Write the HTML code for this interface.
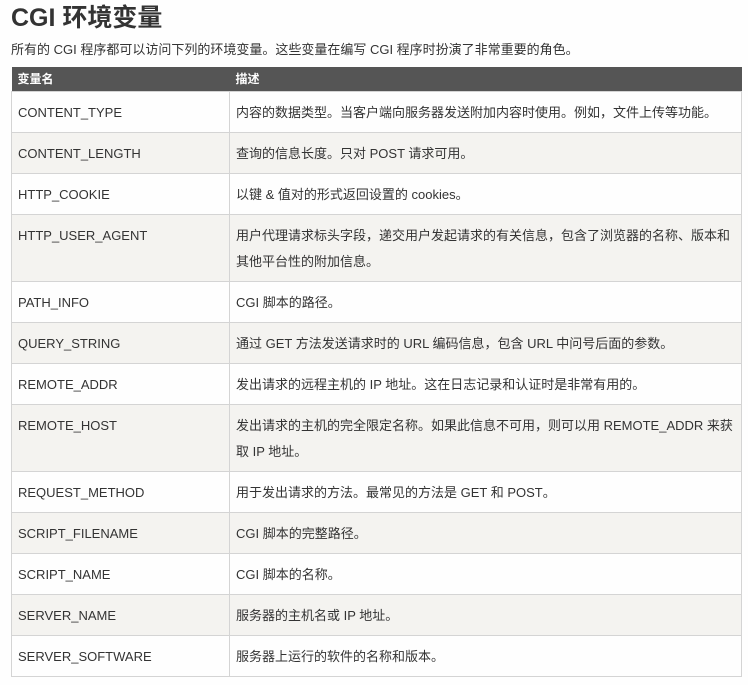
<!DOCTYPE html>
<html><head><meta charset="utf-8"><style>
body{margin:0;background:#fefefe;font-family:"Liberation Sans","Noto Sans CJK SC",sans-serif;color:#333;width:748px;height:685px;overflow:hidden}
h1{margin:0;position:absolute;left:11px;top:3px;font-size:25px;font-weight:bold;line-height:30px;color:#333}
p{margin:0;position:absolute;left:11px;top:40px;font-size:13px;line-height:20px}
table{position:absolute;left:11px;top:67px;width:731px;border-collapse:collapse;font-size:13px}
th{background:#555;color:#fff;text-align:left;font-size:12px;font-weight:bold;padding:0 6px;height:24px;line-height:24px}
td{border:1px solid #d4d4d4;padding:8px 6px 6px;line-height:26px;vertical-align:top}
tr:nth-child(odd) td{background:#f4f3f0}
td:first-child{width:205px}
</style></head><body>
<h1>CGI 环境变量</h1>
<p>所有的 CGI 程序都可以访问下列的环境变量。这些变量在编写 CGI 程序时扮演了非常重要的角色。</p>
<table>
<tr><th>变量名</th><th>描述</th></tr>
<tr><td>CONTENT_TYPE</td><td>内容的数据类型。当客户端向服务器发送附加内容时使用。例如，文件上传等功能。</td></tr>
<tr><td>CONTENT_LENGTH</td><td>查询的信息长度。只对 POST 请求可用。</td></tr>
<tr><td>HTTP_COOKIE</td><td>以键 &amp; 值对的形式返回设置的 cookies。</td></tr>
<tr><td>HTTP_USER_AGENT</td><td>用户代理请求标头字段，递交用户发起请求的有关信息，包含了浏览器的名称、版本和其他平台性的附加信息。</td></tr>
<tr><td>PATH_INFO</td><td>CGI 脚本的路径。</td></tr>
<tr><td>QUERY_STRING</td><td>通过 GET 方法发送请求时的 URL 编码信息，包含 URL 中问号后面的参数。</td></tr>
<tr><td>REMOTE_ADDR</td><td>发出请求的远程主机的 IP 地址。这在日志记录和认证时是非常有用的。</td></tr>
<tr><td>REMOTE_HOST</td><td>发出请求的主机的完全限定名称。如果此信息不可用，则可以用 REMOTE_ADDR 来获取 IP 地址。</td></tr>
<tr><td>REQUEST_METHOD</td><td>用于发出请求的方法。最常见的方法是 GET 和 POST。</td></tr>
<tr><td>SCRIPT_FILENAME</td><td>CGI 脚本的完整路径。</td></tr>
<tr><td>SCRIPT_NAME</td><td>CGI 脚本的名称。</td></tr>
<tr><td>SERVER_NAME</td><td>服务器的主机名或 IP 地址。</td></tr>
<tr><td>SERVER_SOFTWARE</td><td>服务器上运行的软件的名称和版本。</td></tr>
</table>
</body></html>
